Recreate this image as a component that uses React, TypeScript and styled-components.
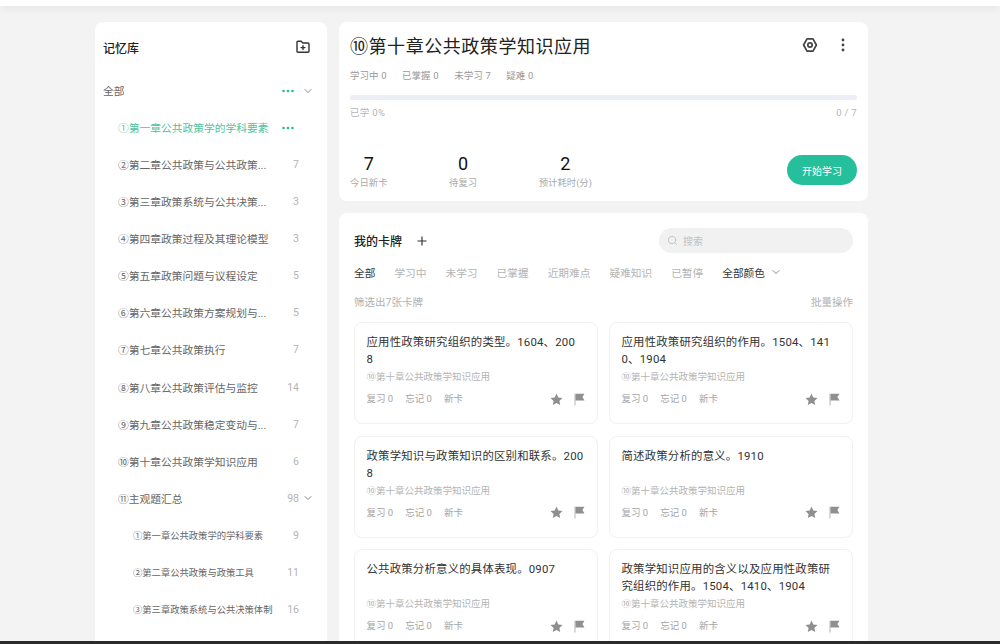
import styled, {createGlobalStyle} from 'styled-components'
import {FiChevronDown, FiPlus, FiSearch} from 'react-icons/fi'

const chapters = [
  {name: '②第二章公共政策与公共政策...', count: '7'},
  {name: '③第三章政策系统与公共决策...', count: '3'},
  {name: '④第四章政策过程及其理论模型', count: '3'},
  {name: '⑤第五章政策问题与议程设定', count: '5'},
  {name: '⑥第六章公共政策方案规划与...', count: '5'},
  {name: '⑦第七章公共政策执行', count: '7'},
  {name: '⑧第八章公共政策评估与监控', count: '14'},
  {name: '⑨第九章公共政策稳定变动与...', count: '7'},
  {name: '⑩第十章公共政策学知识应用', count: '6'},
]

const subChapters = [
  {name: '①第一章公共政策学的学科要素', count: '9'},
  {name: '②第二章公共政策与政策工具', count: '11'},
  {name: '③第三章政策系统与公共决策体制', count: '16'},
]

const chapterName = '⑩第十章公共政策学知识应用'

const cards = [
  {title: '应用性政策研究组织的类型。1604、200\n8'},
  {title: '应用性政策研究组织的作用。1504、141\n0、1904'},
  {title: '政策学知识与政策知识的区别和联系。2008'},
  {title: '简述政策分析的意义。1910'},
  {title: '公共政策分析意义的具体表现。0907'},
  {title: '政策学知识应用的含义以及应用性政策研究组织的作用。1504、1410、1904'},
]

const Dots = ({vertical = false}: {vertical?: boolean}) => (
  <svg width={vertical ? 4 : 12} height={vertical ? 14 : 4} viewBox={vertical ? '0 0 4 14' : '0 0 12 4'} fill="currentColor">
    {vertical
      ? [2, 7, 12].map(p => <circle key={p} cx="2" cy={p} r="1.4" />)
      : [1.5, 6, 10.5].map(p => <circle key={p} cx={p} cy="2" r="1.3" />)}
  </svg>
)

const FolderPlus = () => (
  <svg width="16" height="16" viewBox="0 0 16 16" fill="none" stroke="#333" strokeWidth="1.4" strokeLinejoin="round" strokeLinecap="round">
    <path d="M2 3.2c0-.6.4-1 1-1h3.2l1.6 1.8H13c.6 0 1 .4 1 1v7.2c0 .6-.4 1-1 1H3c-.6 0-1-.4-1-1z" />
    <path d="M8 6.6v4M6 8.6h4" />
  </svg>
)

const NutIcon = () => (
  <svg width="16" height="16" viewBox="0 0 16 16" fill="none" stroke="#444" strokeWidth="1.7">
    <path d="M5 1.9h6L14.4 8 11 14.1H5L1.6 8z" strokeLinejoin="round" />
    <circle cx="8" cy="8" r="2.2" />
  </svg>
)

const StarIcon = () => (
  <svg width="13" height="13" viewBox="0 0 13 13" fill="#8f8f8f">
    <path d="M6.5.6l1.8 3.9 4.2.5-3.1 2.9.8 4.2-3.7-2.1-3.7 2.1.8-4.2L.5 5l4.2-.5z" />
  </svg>
)

const FlagIcon = () => (
  <svg width="11" height="13" viewBox="0 0 11 13" fill="#8f8f8f">
    <path d="M.5.8h1v11.6h-1z" fill="#b5b5b5" />
    <path d="M1.5.8h9L8.4 4l2.1 3.4h-9z" />
  </svg>
)

export default function App() {
  return (
    <>
      <GlobalStyle />
      <Page>
        <TopBar />
        <Content>
          <Sidebar>
            <SidebarHeader>
              <SidebarTitle>记忆库</SidebarTitle>
              <FolderPlus />
            </SidebarHeader>
            <Row>
              <RowName>全部</RowName>
              <RowDots><Dots /></RowDots>
              <Caret />
            </Row>
            <Row $indent={15} $active>
              <RowName>①第一章公共政策学的学科要素</RowName>
              <RowDots><Dots /></RowDots>
              <CaretSlot />
            </Row>
            {chapters.map(c => (
              <Row key={c.name} $indent={15}>
                <RowName>{c.name}</RowName>
                <RowCount>{c.count}</RowCount>
                <CaretSlot />
              </Row>
            ))}
            <Row $indent={15}>
              <RowName>⑪主观题汇总</RowName>
              <RowCount>98</RowCount>
              <Caret />
            </Row>
            {subChapters.map(c => (
              <Row key={c.name} $indent={30} $small>
                <RowName>{c.name}</RowName>
                <RowCount>{c.count}</RowCount>
                <CaretSlot />
              </Row>
            ))}
          </Sidebar>

          <Main>
            <Overview>
              <TitleRow>
                <Title>{chapterName}</Title>
                <TitleIcons>
                  <NutIcon />
                  <IconDots><Dots vertical /></IconDots>
                </TitleIcons>
              </TitleRow>
              <StatusRow>
                <span>学习中 0</span>
                <span>已掌握 0</span>
                <span>未学习 7</span>
                <span>疑难 0</span>
              </StatusRow>
              <Progress />
              <ProgressLabels>
                <span>已学 0%</span>
                <span>0 / 7</span>
              </ProgressLabels>
              <Metrics>
                <Metric>
                  <strong>7</strong>
                  <span>今日新卡</span>
                </Metric>
                <Metric>
                  <strong>0</strong>
                  <span>待复习</span>
                </Metric>
                <Metric>
                  <strong>2</strong>
                  <span>预计耗时(分)</span>
                </Metric>
                <StartButton type="button">开始学习</StartButton>
              </Metrics>
            </Overview>

            <Deck>
              <DeckHeader>
                <DeckTitle>我的卡牌</DeckTitle>
                <AddIcon />
                <SearchBox>
                  <FiSearch />
                  <span>搜索</span>
                </SearchBox>
              </DeckHeader>
              <Tabs>
                <Tab $on>全部</Tab>
                <Tab>学习中</Tab>
                <Tab>未学习</Tab>
                <Tab>已掌握</Tab>
                <Tab>近期难点</Tab>
                <Tab>疑难知识</Tab>
                <Tab>已暂停</Tab>
                <Tab $on>全部颜色<TabCaret /></Tab>
              </Tabs>
              <FilterRow>
                <span>筛选出7张卡牌</span>
                <span>批量操作</span>
              </FilterRow>
              <CardGrid>
                {cards.map(card => (
                  <Card key={card.title}>
                    <CardTitle>{card.title}</CardTitle>
                    <CardChapter>{chapterName}</CardChapter>
                    <CardFooter>
                      <span>复习 0</span>
                      <span>忘记 0</span>
                      <span>新卡</span>
                      <CardIcons>
                        <StarIcon />
                        <FlagIcon />
                      </CardIcons>
                    </CardFooter>
                  </Card>
                ))}
              </CardGrid>
            </Deck>
          </Main>
        </Content>
        <BottomBar />
      </Page>
    </>
  )
}

const GlobalStyle = createGlobalStyle`
  html, body {
    margin: 0;
    height: 100%;
    background: #f3f3f3;
    font-family: Roboto, "Noto Sans CJK SC", sans-serif;
  }
`

const Page = styled.div`
  display: flex;
  flex-direction: column;
  height: 644px;
  overflow: hidden;
`

const TopBar = styled.div`
  flex: 0 0 6px;
  background: #fff;
  box-shadow: 0 2px 8px rgba(0, 0, 0, 0.08);
`

const BottomBar = styled.div`
  flex: 0 0 3px;
  background: #2b2b2b;
`

const Content = styled.div`
  flex: 1;
  min-height: 0;
  display: flex;
  gap: 12px;
  padding: 16px 0 0 95px;
  overflow: hidden;
`

const Sidebar = styled.aside`
  flex: 0 0 232px;
  box-sizing: border-box;
  padding: 0 8px;
  border-radius: 8px 8px 0 0;
  background: #fff;
`

const SidebarHeader = styled.div`
  display: flex;
  align-items: center;
  justify-content: space-between;
  height: 50px;
  padding-right: 8px;
`

const SidebarTitle = styled.h2`
  margin: 0;
  color: #222;
  font-size: 12px;
  font-weight: 500;
`

const Row = styled.div<{$indent?: number; $active?: boolean; $small?: boolean}>`
  display: flex;
  align-items: center;
  height: 37.07px;
  padding-left: ${p => p.$indent ?? 0}px;
  color: ${p => (p.$active ? '#4fc3a1' : '#666')};
  font-size: ${p => (p.$small ? 9.3 : 10.75)}px;
`

const RowName = styled.span`
  flex: 1;
  min-width: 0;
  white-space: nowrap;
  overflow: hidden;
`

const RowCount = styled.span`
  color: #b4b4b4;
  font-size: 10.5px;
`

const RowDots = styled.span`
  display: flex;
  margin-right: 5px;
  color: #25bf9a;
`

const Caret = styled(FiChevronDown)`
  flex: 0 0 auto;
  width: 12px;
  height: 12px;
  margin: 0 5px 0 3px;
  color: #888;
`

const CaretSlot = styled.span`
  flex: 0 0 20px;
`

const Main = styled.main`
  flex: 0 0 529px;
  display: flex;
  flex-direction: column;
  gap: 12px;
`

const Overview = styled.section`
  flex: 0 0 179px;
  box-sizing: border-box;
  padding: 8px 11px 0;
  border-radius: 8px;
  background: #fff;
`

const TitleRow = styled.div`
  display: flex;
  align-items: center;
  justify-content: space-between;
  height: 30px;
`

const Title = styled.h1`
  margin: 0;
  color: #222;
  font-size: 18px;
  font-weight: 400;
  letter-spacing: 0.55px;
`

const TitleIcons = styled.div`
  display: flex;
  align-items: center;
  gap: 23px;
  padding-right: 12px;
`

const IconDots = styled.span`
  display: flex;
  color: #444;
`

const StatusRow = styled.div`
  display: flex;
  gap: 15.5px;
  margin-top: 9px;
  color: #9a9a9a;
  font-size: 9.5px;
  line-height: 14px;
  word-spacing: 0.4px;
`

const Progress = styled.div`
  height: 5px;
  margin-top: 12px;
  border-radius: 3px;
  background: #eceef5;
`

const ProgressLabels = styled.div`
  display: flex;
  justify-content: space-between;
  margin-top: 6px;
  color: #b4b4b4;
  font-size: 9.5px;
  line-height: 14px;
  letter-spacing: 0.3px;
`

const Metrics = styled.div`
  display: flex;
  align-items: flex-start;
  gap: 61.5px;
  margin-top: 32px;
`

const Metric = styled.div`
  display: flex;
  flex-direction: column;
  align-items: center;

  strong {
    color: #111;
    font-size: 18px;
    font-weight: 400;
    line-height: 24px;
  }

  span {
    color: #aaa;
    font-size: 9.4px;
    line-height: 14px;
  }
`

const StartButton = styled.button`
  width: 70px;
  height: 30px;
  margin: 3px 0 0 auto;
  border: 0;
  border-radius: 15px;
  background: #26bf9b;
  color: #fff;
  font-family: inherit;
  font-size: 10px;
`

const Deck = styled.section`
  flex: none;
  box-sizing: border-box;
  padding: 15px 15px 0;
  border-radius: 8px;
  background: #fff;
`

const DeckHeader = styled.div`
  display: flex;
  align-items: center;
  height: 25px;
`

const DeckTitle = styled.h2`
  margin: 0;
  color: #222;
  font-size: 12px;
  font-weight: 500;
`

const AddIcon = styled(FiPlus)`
  width: 14px;
  height: 14px;
  margin-left: 13px;
  color: #333;
`

const SearchBox = styled.div`
  display: flex;
  align-items: center;
  gap: 5px;
  box-sizing: border-box;
  width: 194px;
  height: 25px;
  margin-left: auto;
  padding-left: 8px;
  border-radius: 13px;
  background: #f1f1f1;
  color: #c2c2c2;
  font-size: 10px;

  svg {
    width: 11px;
    height: 11px;
  }
`

const Tabs = styled.div`
  display: flex;
  align-items: center;
  gap: 19px;
  margin-top: 9px;
  height: 20px;
`

const Tab = styled.span<{$on?: boolean}>`
  display: flex;
  align-items: center;
  color: ${p => (p.$on ? '#333' : '#b4b4b4')};
  font-size: 10.7px;
`

const TabCaret = styled(FiChevronDown)`
  width: 12px;
  height: 12px;
  margin-left: 5px;
  color: #888;
`

const FilterRow = styled.div`
  display: flex;
  justify-content: space-between;
  margin-top: 11px;
  color: #b0b0b0;
  font-size: 10.5px;
  line-height: 20px;
`

const CardGrid = styled.div`
  display: grid;
  grid-template-columns: 1fr 1fr;
  gap: 11.7px 11px;
  margin-top: 9px;
`

const Card = styled.article`
  display: flex;
  flex-direction: column;
  box-sizing: border-box;
  height: 102px;
  padding: 11px 12.5px 0 11.5px;
  border: 1px solid #f1f1f1;
  border-radius: 8px;
  background: #fff;
`

const CardTitle = styled.div`
  height: 34px;
  color: #333;
  font-size: 11.4px;
  letter-spacing: 0.2px;
  line-height: 17px;
  white-space: pre-line;
  word-break: break-all;
`

const CardChapter = styled.div`
  margin-top: 2px;
  color: #b4b4b4;
  font-size: 9.5px;
  line-height: 14px;
`

const CardFooter = styled.div`
  display: flex;
  align-items: center;
  gap: 12px;
  margin-top: 8px;
  color: #a5a5a5;
  font-size: 9.5px;
  line-height: 14px;
`

const CardIcons = styled.div`
  display: flex;
  align-items: center;
  gap: 11px;
  margin-left: auto;
`
